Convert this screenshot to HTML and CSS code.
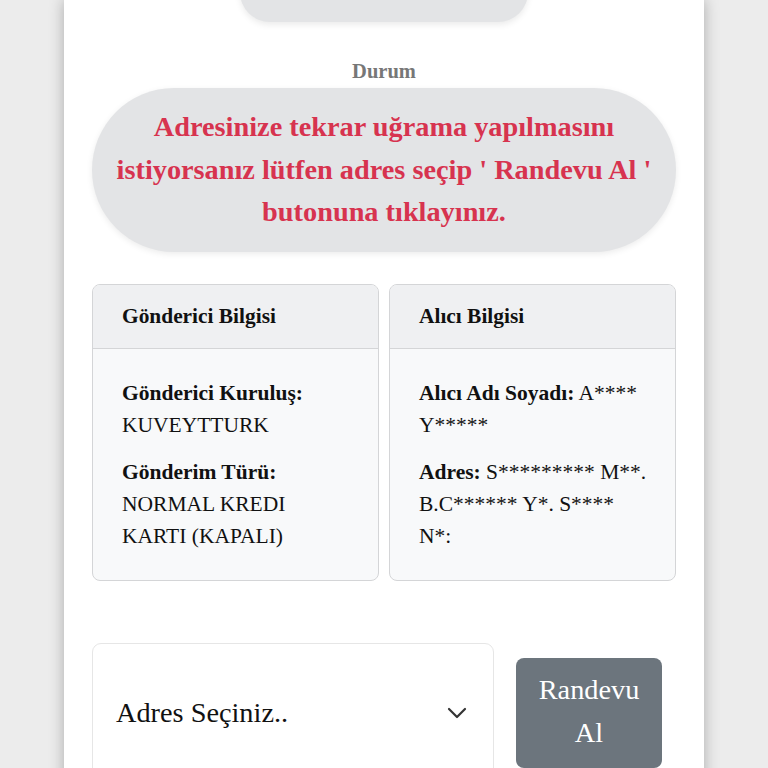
FILE: index.html
```html
<!DOCTYPE html>
<html lang="tr">
<head>
<meta charset="utf-8">
<link rel="stylesheet" href="styles.css">
</head>
<body>
<div class="panel">
  <div class="top-pill"></div>
  <div class="status-label">Durum</div>
  <div class="status-pill">Adresinize tekrar uğrama yapılmasını istiyorsanız lütfen adres seçip ' Randevu Al ' butonuna tıklayınız.</div>
  <div class="cards">
    <div class="card">
      <div class="card-head">Gönderici Bilgisi</div>
      <div class="card-body">
        <p><b>Gönderici Kuruluş:</b><br>KUVEYTTURK</p>
        <p><b>Gönderim Türü:</b><br>NORMAL KREDI KARTI&nbsp;(KAPALI)</p>
      </div>
    </div>
    <div class="card">
      <div class="card-head">Alıcı Bilgisi</div>
      <div class="card-body">
        <p><b>Alıcı Adı Soyadı:</b> A**** Y*****</p>
        <p><b>Adres:</b> S********* M**. B.C****** Y*. S**** N*:</p>
      </div>
    </div>
  </div>
  <div class="actions">
    <div class="select">
      <span>Adres Seçiniz..</span>
      <svg class="chev" width="20" height="12" viewBox="0 0 20 12"><path d="M2 2 L10 10 L18 2" fill="none" stroke="#333" stroke-width="2.2" stroke-linecap="round" stroke-linejoin="round"/></svg>
    </div>
    <button class="btn">Randevu<br>Al</button>
  </div>
</div>
</body>
</html>
```
FILE: styles.css
```css
html, body {
  margin: 0;
  padding: 0;
  background: #ececec;
  font-family: "Liberation Serif", "Times New Roman", serif;
  overflow: hidden;
}
.panel {
  width: 640px;
  margin: 0 auto;
  background: #fff;
  min-height: 800px;
  box-shadow: 0 0 14px rgba(0, 0, 0, 0.28);
  padding: 0 28px;
  box-sizing: border-box;
  display: flex;
  flex-direction: column;
}
.top-pill {
  align-self: center;
  width: 288px;
  height: 62px;
  margin-top: -40px;
  border-radius: 30px;
  background: #e3e4e6;
  box-shadow: 0 3px 6px rgba(0, 0, 0, 0.08);
}
.status-label {
  margin-top: 38px;
  text-align: center;
  font-weight: bold;
  font-size: 20.5px;
  line-height: 22px;
  color: #777;
}
.status-pill {
  margin-top: 6px;
  background: #e3e4e6;
  border-radius: 82px;
  padding: 18px 16px;
  text-align: center;
  color: #d7334f;
  font-weight: bold;
  font-size: 28.3px;
  line-height: 42.5px;
  box-shadow: 0 2px 6px rgba(0, 0, 0, 0.08);
}
.cards {
  margin-top: 32px;
  display: grid;
  grid-template-columns: 1fr 1fr;
  gap: 10px;
}
.card {
  border: 1.5px solid #d4d5d7;
  border-radius: 8px;
  background: #f8f9fa;
  overflow: hidden;
  color: #111;
}
.card-head {
  background: #eff0f2;
  border-bottom: 1.5px solid #d4d5d7;
  padding: 0 29px;
  height: 63px;
  display: flex;
  align-items: center;
  font-weight: bold;
  font-size: 21.4px;
}
.card-body {
  padding: 28px 26px 28px 29px;
  font-size: 21.5px;
  line-height: 32px;
}
.card-body p {
  margin: 0 0 15px;
}
.card-body p:last-child {
  margin-bottom: 0;
}
.actions {
  margin-top: 62px;
  display: flex;
  align-items: center;
  gap: 22px;
  padding-right: 14px;
}
.select {
  flex: 1;
  height: 138px;
  border: 1.5px solid #e6e6e6;
  border-radius: 9px;
  background: #fff;
  display: flex;
  align-items: center;
  justify-content: space-between;
  padding: 0 26px 0 23px;
  font-size: 28.3px;
  color: #111;
}
.chev {
  display: block;
}
.btn {
  width: 146px;
  height: 110px;
  border: none;
  border-radius: 8px;
  background: #6c757d;
  color: #fff;
  font-family: "Liberation Serif", "Times New Roman", serif;
  font-size: 28.3px;
  line-height: 43px;
  padding: 0 0 3px;
}
```
